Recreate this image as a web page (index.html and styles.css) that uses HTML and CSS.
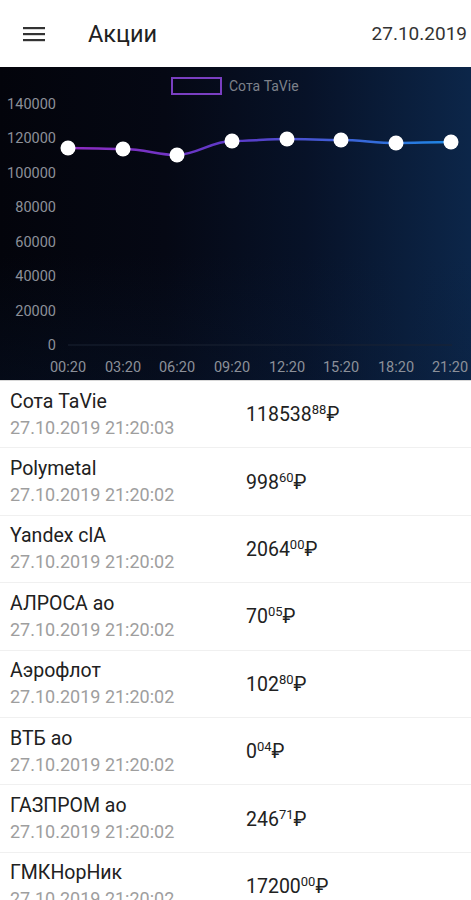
FILE: index.html
```html
<!DOCTYPE html>
<html lang="ru">
<head>
<meta charset="utf-8">
<title>Акции</title>
<link rel="stylesheet" href="styles.css">
</head>
<body>
<header class="appbar">
  <svg class="menu" width="22" height="16" viewBox="0 0 22 16"><rect x="0" y="1" width="22" height="2.2" fill="#333"/><rect x="0" y="7" width="22" height="2.2" fill="#333"/><rect x="0" y="13" width="22" height="2.2" fill="#333"/></svg>
  <h1 class="title">Акции</h1>
  <span class="date">27.10.2019</span>
</header>
<section class="chart">
  <svg width="471" height="314" viewBox="0 0 471 314">
    <defs>
      <linearGradient id="ln" x1="68" y1="0" x2="451" y2="0" gradientUnits="userSpaceOnUse">
        <stop offset="0" stop-color="#8e2bc0"/>
        <stop offset="0.45" stop-color="#5a3bc8"/>
        <stop offset="1" stop-color="#1e88e5"/>
      </linearGradient>
    </defs>
    <rect x="172" y="11" width="49" height="16" fill="none" stroke="#7a3fc2" stroke-width="2"/>
    <text x="229" y="24" class="lg">Сота TaVie</text>
    <g class="yl" text-anchor="end">
      <text x="56" y="42">140000</text>
      <text x="56" y="76">120000</text>
      <text x="56" y="111">100000</text>
      <text x="56" y="145">80000</text>
      <text x="56" y="180">60000</text>
      <text x="56" y="214">40000</text>
      <text x="56" y="249">20000</text>
      <text x="56" y="283">0</text>
    </g>
    <line x1="68" y1="278" x2="452" y2="278" stroke="#1a2233" stroke-width="1"/>
    <g class="xl" text-anchor="middle">
      <text x="68" y="305">00:20</text>
      <text x="123" y="305">03:20</text>
      <text x="177" y="305">06:20</text>
      <text x="232" y="305">09:20</text>
      <text x="287" y="305">12:20</text>
      <text x="341" y="305">15:20</text>
      <text x="396" y="305">18:20</text>
      <text x="450" y="305">21:20</text>
    </g>
    <path d="M68 81 C90 81,105 82,123 82 C145 82,158 88,177 88 C196 88,212 74,232 74 C250 74,268 72,287 72 C305 72,322 73,341 73 C360 73,376 76,396 76 C414 76,432 75,451 75" fill="none" stroke="url(#ln)" stroke-width="2.5"/>
    <g fill="#fff">
      <circle cx="68" cy="81" r="7.5"/>
      <circle cx="123" cy="82" r="7.5"/>
      <circle cx="177" cy="88" r="7.5"/>
      <circle cx="232" cy="74" r="7.5"/>
      <circle cx="287" cy="72" r="7.5"/>
      <circle cx="341" cy="73" r="7.5"/>
      <circle cx="396" cy="76" r="7.5"/>
      <circle cx="451" cy="75" r="7.5"/>
    </g>
  </svg>
</section>
<ul class="list">
  <li class="row"><div class="info"><div class="name">Сота TaVie</div><div class="time">27.10.2019 21:20:03</div></div><div class="price">118538<sup>88</sup>₽</div></li>
  <li class="row"><div class="info"><div class="name">Polymetal</div><div class="time">27.10.2019 21:20:02</div></div><div class="price">998<sup>60</sup>₽</div></li>
  <li class="row"><div class="info"><div class="name">Yandex clA</div><div class="time">27.10.2019 21:20:02</div></div><div class="price">2064<sup>00</sup>₽</div></li>
  <li class="row"><div class="info"><div class="name">АЛРОСА ао</div><div class="time">27.10.2019 21:20:02</div></div><div class="price">70<sup>05</sup>₽</div></li>
  <li class="row"><div class="info"><div class="name">Аэрофлот</div><div class="time">27.10.2019 21:20:02</div></div><div class="price">102<sup>80</sup>₽</div></li>
  <li class="row"><div class="info"><div class="name">ВТБ ао</div><div class="time">27.10.2019 21:20:02</div></div><div class="price">0<sup>04</sup>₽</div></li>
  <li class="row"><div class="info"><div class="name">ГАЗПРОМ ао</div><div class="time">27.10.2019 21:20:02</div></div><div class="price">246<sup>71</sup>₽</div></li>
  <li class="row"><div class="info"><div class="name">ГМКНорНик</div><div class="time">27.10.2019 21:20:02</div></div><div class="price">17200<sup>00</sup>₽</div></li>
</ul>
</body>
</html>
```
FILE: styles.css
```css
* { box-sizing: border-box; }
html, body { margin: 0; padding: 0; }
body {
  width: 471px;
  height: 900px;
  overflow: hidden;
  background: #fff;
  font-family: Roboto, "Liberation Sans", "DejaVu Sans", sans-serif;
  color: #212121;
}
.appbar {
  height: 67px;
  display: flex;
  align-items: center;
  padding: 0 4px 0 23px;
  background: #fff;
}
.menu { flex: none; margin-top: 0; }
.title {
  margin: 0 0 0 43px;
  font-size: 23.5px;
  font-weight: 400;
  color: #212121;
  flex: 1;
}
.date {
  font-size: 19px;
  color: #333;
}
.chart {
  height: 314px;
  background:
    linear-gradient(180deg, rgba(0,0,0,0) 60%, rgba(10,30,60,0.25) 100%),
    linear-gradient(90deg, #03040b 0%, #050814 35%, #071228 65%, #0c2649 100%);
  border-bottom: 1px solid #d8d8d8;
}
.chart svg { display: block; }
.lg { font-size: 14px; fill: #7d818a; }
.yl text, .xl text { font-size: 14.5px; fill: #8c9099; }
.list { list-style: none; margin: 0; padding: 0; }
.row {
  height: 67.4px;
  display: flex;
  align-items: center;
  padding: 0 10px;
  border-bottom: 1px solid #f0f0f0;
}
.info { width: 236px; display: flex; flex-direction: column; gap: 3px; }
.name { font-size: 19.5px; color: #212121; line-height: 23px; }
.time { font-size: 18px; color: #9e9e9e; line-height: 23px; }
.price {
  font-size: 19.5px;
  color: #212121;
  margin-top: 1px;
}
.price sup {
  font-size: 13px;
  vertical-align: 0;
  position: relative;
  top: -7px;
}
```
